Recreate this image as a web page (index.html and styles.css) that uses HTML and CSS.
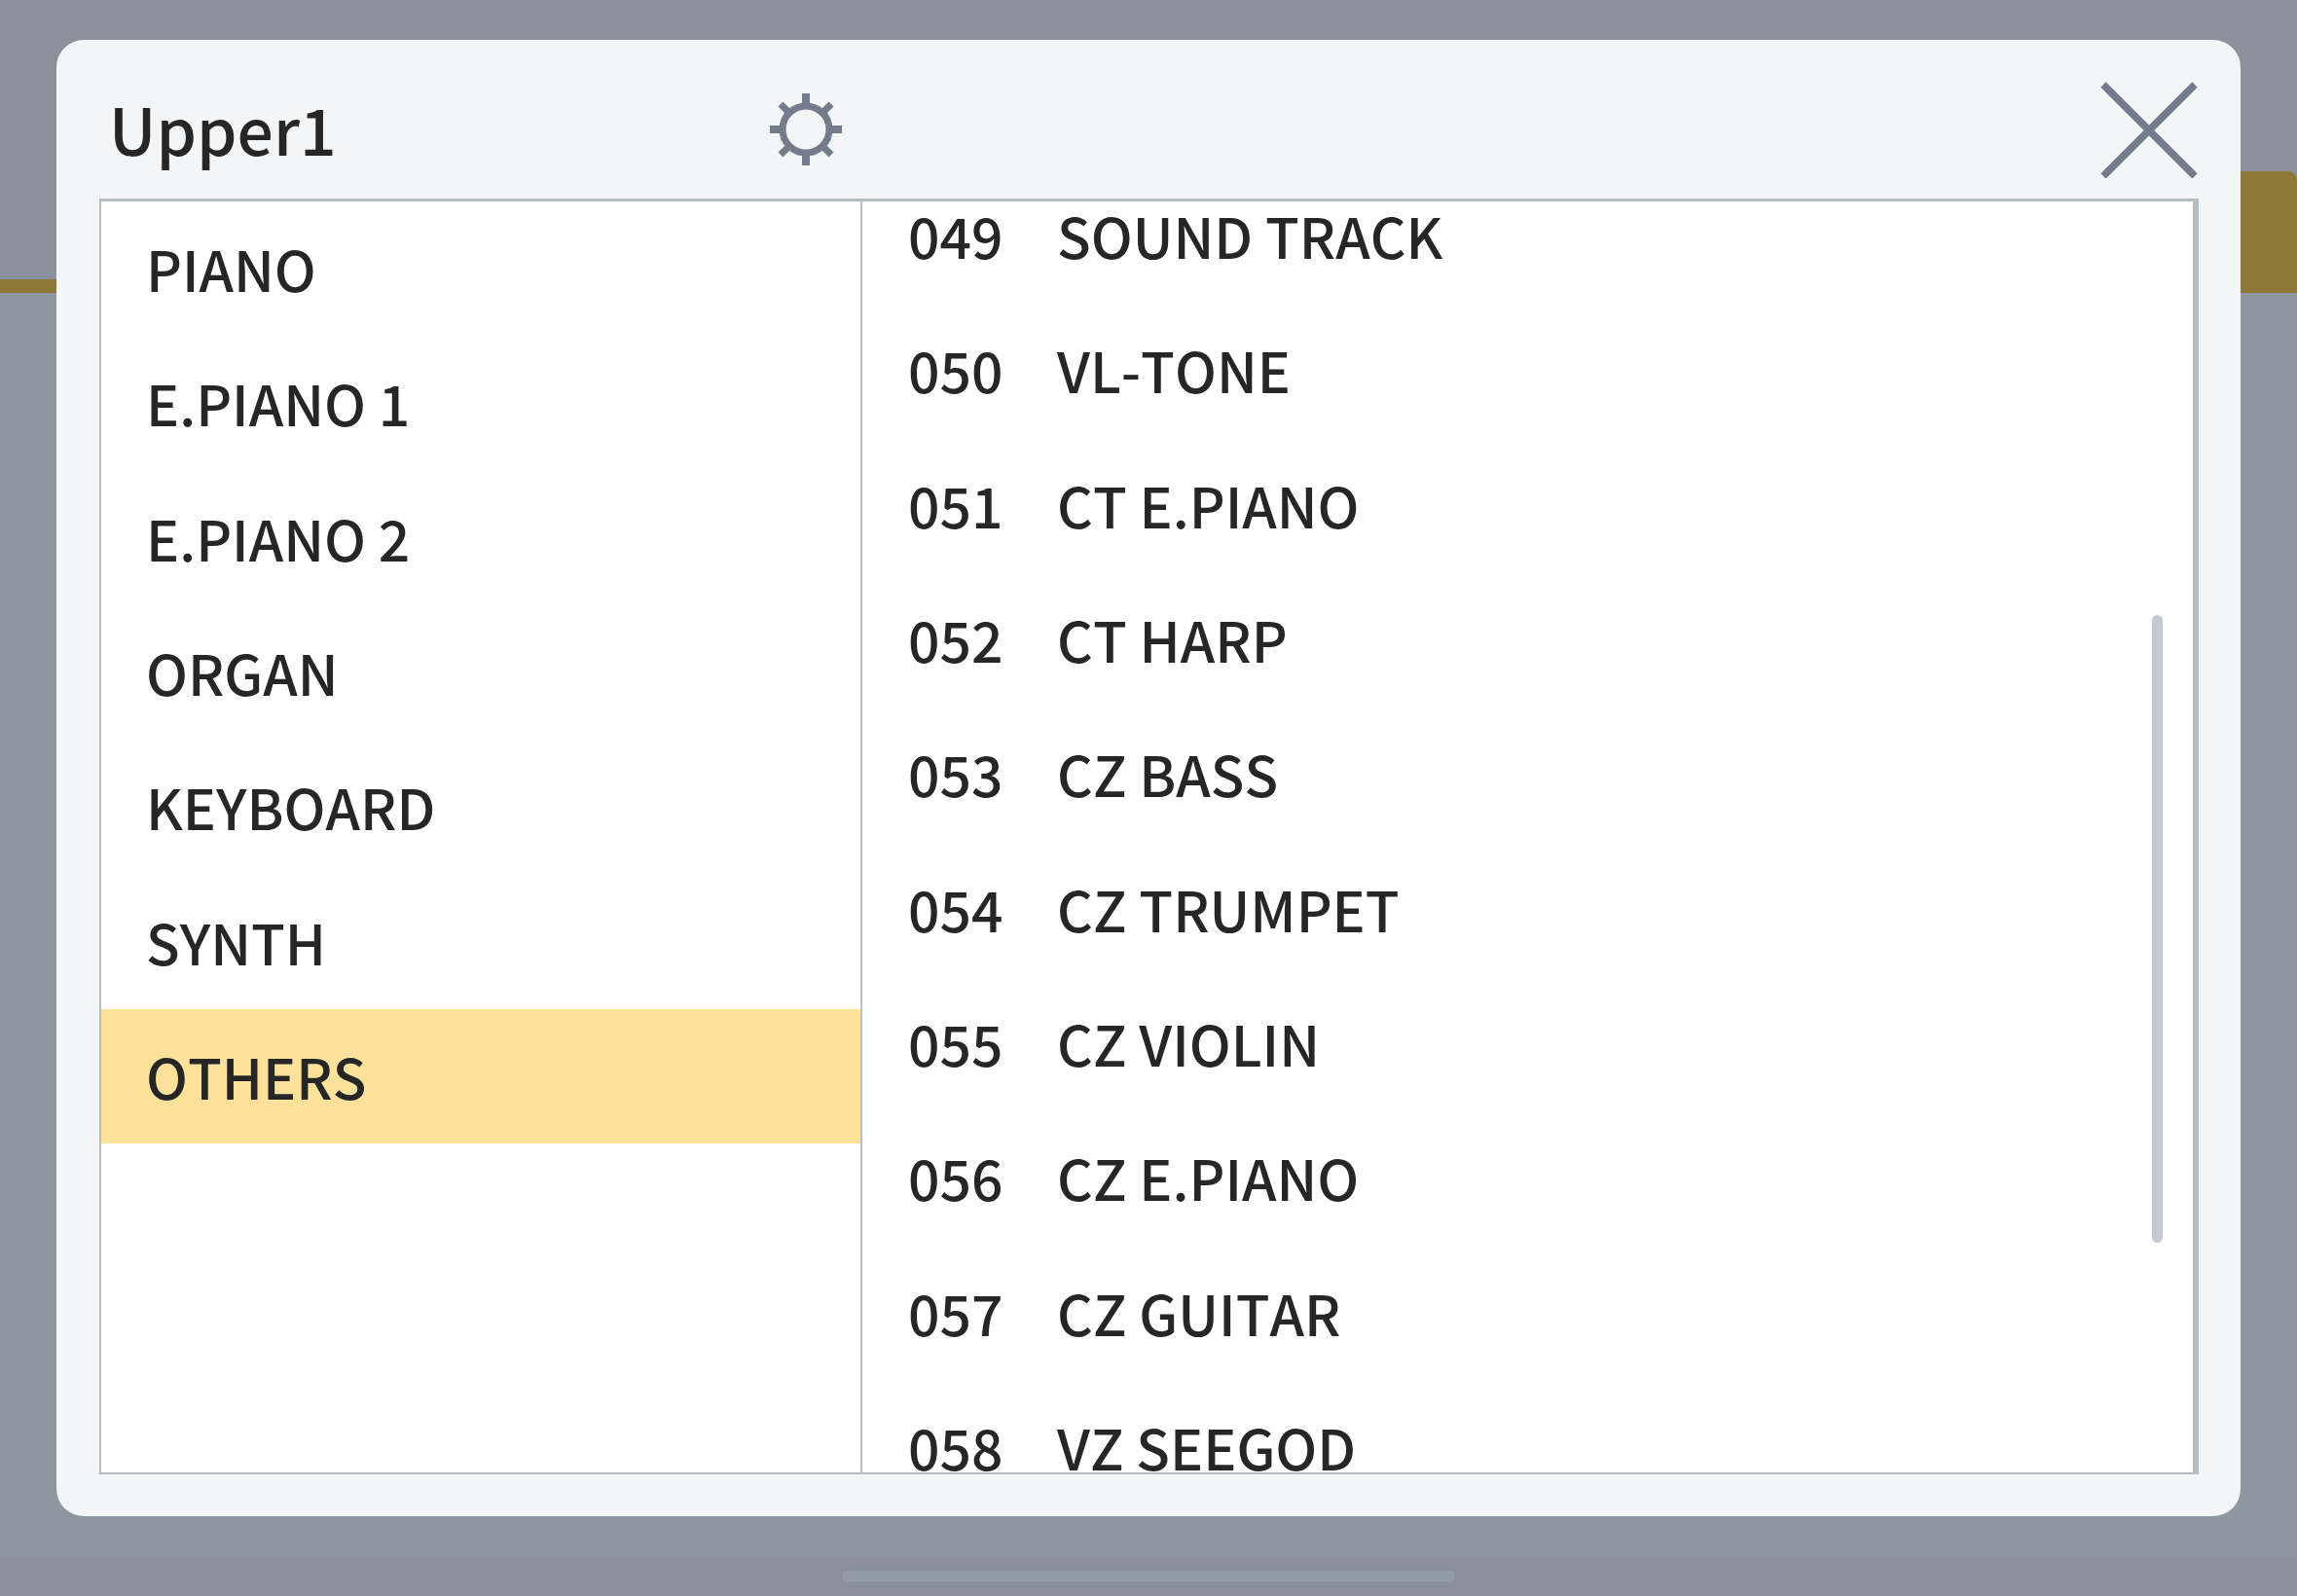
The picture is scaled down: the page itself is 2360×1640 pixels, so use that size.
FILE: index.html
```html
<!DOCTYPE html>
<html lang="en">
<head>
    <meta charset="UTF-8">
    <meta name="viewport" content="width=device-width, initial-scale=1.0">
    <title>Upper1</title>
    <link rel="stylesheet" href="styles.css">
</head>
<body>
    <!-- Dimmed app screen -->
    <div class="screen">
        <div class="screen-top"></div>
        <div class="screen-tabs">
            <div class="screen-tab"></div>
        </div>
        <div class="screen-body"></div>
        <div class="screen-bottom">
            <div class="home-bar"></div>
        </div>
    </div>

    <!-- Tone selection dialog -->
    <div class="dialog" role="dialog" aria-labelledby="dialogTitle">
        <header class="dialog-header">
            <div class="title-group">
                <h1 id="dialogTitle">Upper1</h1>
                <button class="icon-button" aria-label="Settings">
                    <svg width="74" height="74" viewBox="-37 -37 74 74" fill="none" stroke="currentColor">
                        <circle r="24" stroke-width="7"/>
                        <path stroke-width="8" d="M0-37V-25M0 37V25M-37 0H-25M37 0H25"/>
                        <path stroke-width="7" d="M-26-26L-18-18M26-26L18-18M-26 26L-18 18M26 26L18 18"/>
                    </svg>
                </button>
            </div>
            <button class="icon-button" aria-label="Close">
                <svg width="100" height="100" viewBox="-50 -51 100 100" fill="none" stroke="currentColor">
                    <path stroke-width="7.5" d="M-47-47L47 47M47-47L-47 47"/>
                </svg>
            </button>
        </header>

        <div class="panels">
            <nav class="panel categories" aria-label="Categories">
                <ul class="list">
                    <li><button class="item">PIANO</button></li>
                    <li><button class="item">E.PIANO 1</button></li>
                    <li><button class="item">E.PIANO 2</button></li>
                    <li><button class="item">ORGAN</button></li>
                    <li><button class="item">KEYBOARD</button></li>
                    <li><button class="item">SYNTH</button></li>
                    <li><button class="item selected" aria-current="true">OTHERS</button></li>
                </ul>
            </nav>
            <div class="panel tones">
                <ul class="list scrolled">
                    <li><button class="item"><span class="number">049</span>SOUND TRACK</button></li>
                    <li><button class="item"><span class="number">050</span>VL-TONE</button></li>
                    <li><button class="item"><span class="number">051</span>CT E.PIANO</button></li>
                    <li><button class="item"><span class="number">052</span>CT HARP</button></li>
                    <li><button class="item"><span class="number">053</span>CZ BASS</button></li>
                    <li><button class="item"><span class="number">054</span>CZ TRUMPET</button></li>
                    <li><button class="item"><span class="number">055</span>CZ VIOLIN</button></li>
                    <li><button class="item"><span class="number">056</span>CZ E.PIANO</button></li>
                    <li><button class="item"><span class="number">057</span>CZ GUITAR</button></li>
                    <li><button class="item"><span class="number">058</span>VZ SEEGOD</button></li>
                </ul>
                <div class="scroll-thumb"></div>
            </div>
        </div>
    </div>
</body>
</html>
```

FILE: styles.css
```css
* {
    box-sizing: border-box;
}
body {
    margin: 0;
    height: 100vh;
    display: flex;
    padding: 41px 58px 82px;
    overflow: hidden;
    font-family: "Noto Sans CJK JP", "Noto Sans", sans-serif;
    font-weight: 500;
    font-kerning: none;
    color: #262626;
}
button {
    margin: 0;
    padding: 0;
    border: none;
    background: none;
    font: inherit;
    font-kerning: inherit;
    color: inherit;
    cursor: pointer;
}

/* Dimmed app screen */
.screen {
    position: absolute;
    inset: 0;
    z-index: -1;
    display: flex;
    flex-direction: column;
    background-color: #8a909c;
}
.screen-top {
    height: 176px;
}
.screen-tabs {
    height: 125px;
    display: flex;
    justify-content: flex-end;
    border-bottom: 14px solid #8d783a;
}
.screen-tab {
    width: 240px;
    height: 125px;
    border-radius: 0 9px 0 0;
    background-color: #8d783a;
}
.screen-body {
    flex: 1;
    background-color: #8e969f;
}
.screen-bottom {
    height: 40px;
    padding-top: 14px;
    display: flex;
    justify-content: center;
}
.home-bar {
    width: 630px;
    height: 11px;
    border-radius: 6px;
    background-color: #929ca6;
}

/* Dialog */
.dialog {
    flex: 1;
    display: flex;
    flex-direction: column;
    padding: 0 43px 43px 44px;
    border-radius: 28px;
    background-color: #f3f5f7;
}
.dialog-header {
    height: 163px;
    padding: 20px 1px 0 0;
    display: grid;
    grid-template-columns: 36.3% 1fr;
    align-items: center;
    justify-items: end;
}
.title-group {
    width: 100%;
    display: flex;
    align-items: center;
    justify-content: space-between;
    padding: 0 20px 0 10px;
}
h1 {
    margin: 0;
    padding-bottom: 4px;
    font-size: 66px;
    line-height: 96px;
    font-weight: 500;
}
.icon-button {
    display: flex;
    color: #747c8b;
}

/* Lists */
.panels {
    flex: 1;
    min-height: 0;
    display: grid;
    grid-template-columns: 36.3% 1fr;
    border: 2px solid #b5bdc6;
    border-top-width: 3px;
    border-right-width: 6px;
    background-color: #fff;
}
.panel {
    position: relative;
    min-height: 0;
    overflow: hidden;
}
.tones {
    border-left: 2px solid #b5bdc6;
}
.list {
    margin: 0;
    padding: 0;
    height: 1383px;
    display: grid;
    grid-template-rows: repeat(10, 1fr);
    list-style: none;
}
.scrolled {
    margin-top: -34px;
}
.item {
    width: 100%;
    height: 100%;
    padding: 0 46px 2px;
    display: flex;
    align-items: center;
    font-size: 57px;
    line-height: 58px;
    text-align: left;
}
.tones .item {
    padding-left: 47px;
}
.selected {
    background-color: #fee19a;
}
.number {
    width: 153px;
}
.scroll-thumb {
    position: absolute;
    top: 425px;
    right: 31px;
    width: 11px;
    height: 645px;
    border-radius: 6px;
    background-color: #c6c8d2;
}
```
